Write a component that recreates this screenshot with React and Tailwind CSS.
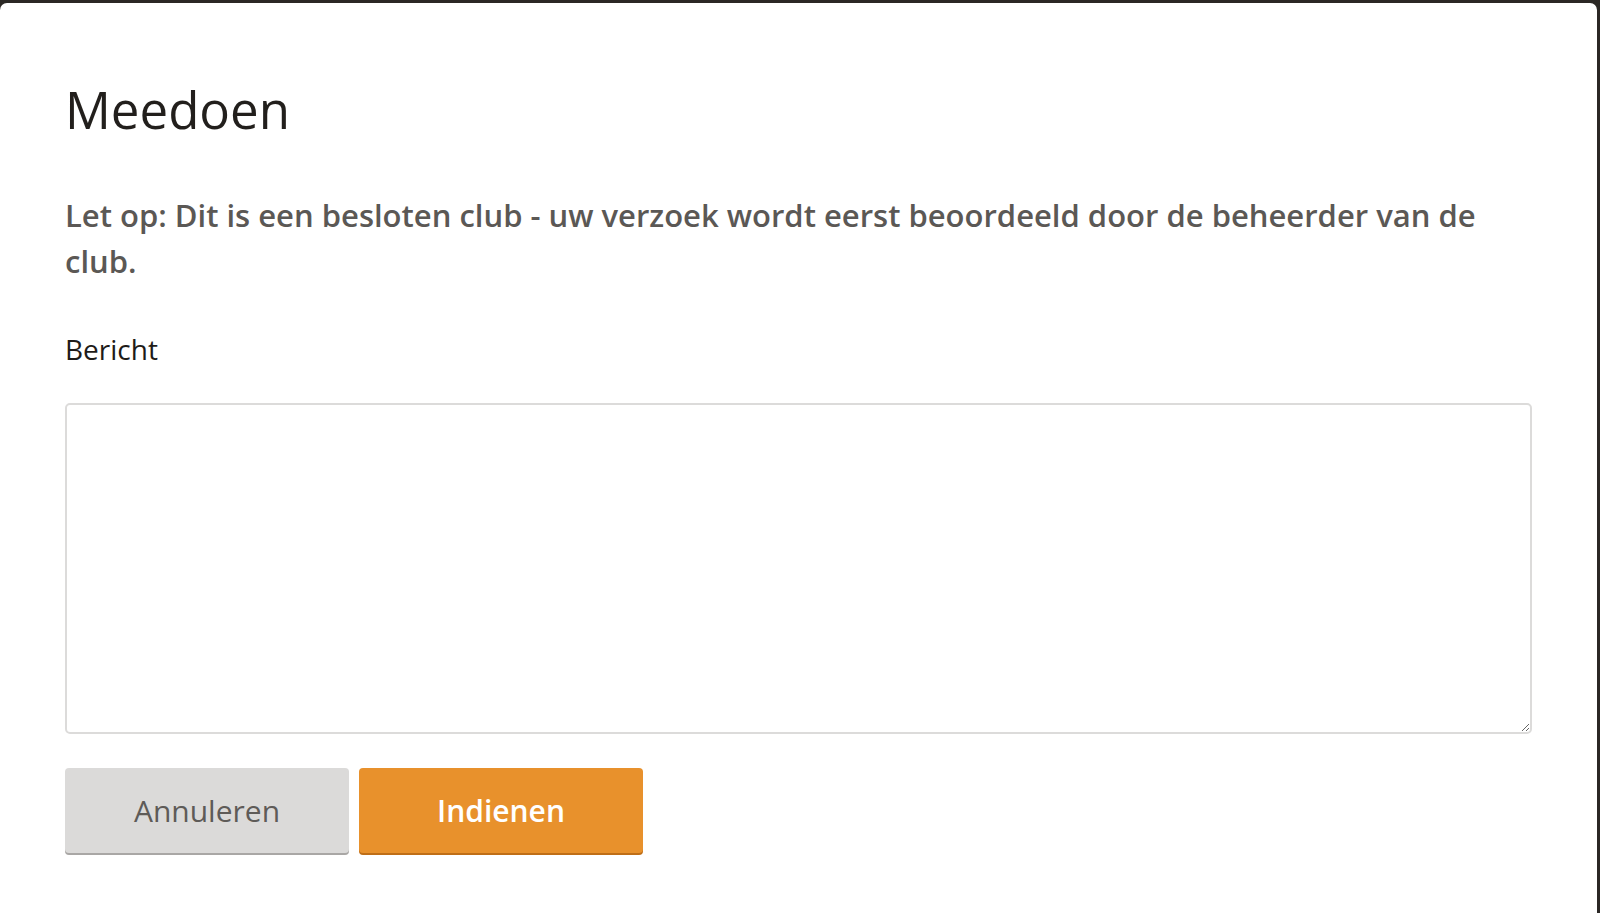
import React, { useState } from 'react';

const JoinClubModal = () => {
  const [message, setMessage] = useState('');

  return (
    <div className="min-h-screen bg-[#2b2825] pt-[3px] pr-[3px]" style={{ fontFamily: '"Open Sans", "Noto Sans", sans-serif' }}>
      <div className="min-h-[910px] bg-white rounded-t-[7px] px-[65px] pt-[76px] pb-10">
        <h1 className="text-[51px] leading-[60px] font-normal text-[#221f1c]">Meedoen</h1>

        <p className="mt-[53px] text-[31px] leading-[46px] font-semibold text-[#5b5855]">
          Let op: Dit is een besloten club - uw verzoek wordt eerst beoordeeld door de beheerder van de club.
        </p>

        <label htmlFor="bericht" className="block mt-[45px] text-[28px] leading-[40px] text-[#1e1b18]">
          Bericht
        </label>

        <textarea
          id="bericht"
          value={message}
          onChange={(e) => setMessage(e.target.value)}
          className="block mt-[34px] w-full h-[331px] border-2 border-[#dcdbda] rounded-[5px] px-4 py-3 text-[24px] text-[#1e1b18] outline-none"
        />

        <div className="flex gap-[10px] mt-[34px]">
          <button className="w-[284px] h-[85px] rounded-[4px] bg-[#dbdad9] shadow-[0_2px_0_#a9a7a5] text-[30px] text-[#5e5b58]">
            Annuleren
          </button>
          <button className="w-[284px] h-[85px] rounded-[4px] bg-[#e8912c] shadow-[0_2px_0_#bf6e17] text-[30px] font-semibold text-white">
            Indienen
          </button>
        </div>
      </div>
    </div>
  );
};

export default function App() {
  return <JoinClubModal />;
}
